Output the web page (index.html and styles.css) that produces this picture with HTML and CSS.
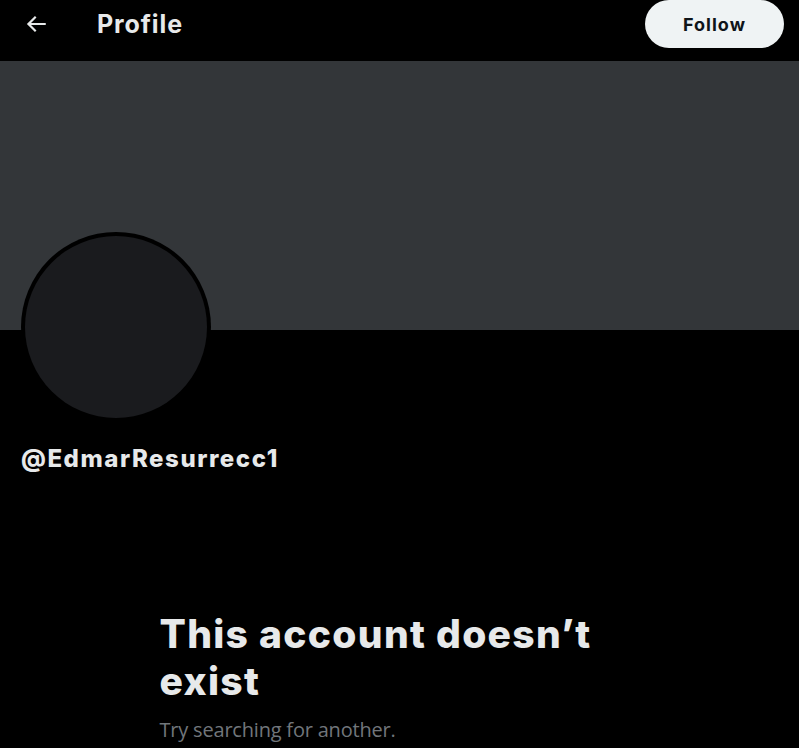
FILE: index.html
```html
<!DOCTYPE html>
<html lang="en">
<head>
<meta charset="utf-8">
<title>Profile</title>
<link rel="stylesheet" href="styles.css">
</head>
<body>
<div class="page">
  <header class="topbar">
    <div class="back">
      <svg viewBox="0 0 24 24" width="26" height="26" aria-hidden="true"><path fill="currentColor" d="M7.414 13l5.043 5.04-1.414 1.42L3.586 12l7.457-7.46 1.414 1.42L7.414 11H21v2H7.414z"/></svg>
    </div>
    <h1 class="title">Profile</h1>
    <button class="follow">Follow</button>
  </header>
  <div class="banner"></div>
  <section class="profile">
    <div class="avatar"><div class="avatar-inner"></div></div>
    <div class="handle">@EdmarResurrecc1</div>
  </section>
  <section class="empty">
    <h2 class="empty-title">This account doesn’t exist</h2>
    <p class="empty-sub">Try searching for another.</p>
  </section>
</div>
</body>
</html>
```
FILE: styles.css
```css
* { box-sizing: border-box; }
html, body { margin: 0; padding: 0; background: #000; }
body {
  font-family: "Inter", "Noto Sans", sans-serif;
  color: #e7e9ea;
  width: 799px;
  height: 748px;
  overflow: hidden;
}
.topbar {
  height: 61px;
  display: flex;
  align-items: flex-start;
  padding: 0 15px 0 23px;
}
.back {
  width: 26px;
  height: 48px;
  display: flex;
  align-items: center;
  color: #e7e9ea;
}
.back svg { display: block; }
.title {
  margin: 0 0 0 48px;
  font-size: 25px;
  font-weight: 700;
  line-height: 49px;
  letter-spacing: 0.9px;
  flex: 1;
}
.follow {
  width: 139px;
  height: 48px;
  border: 0;
  border-radius: 24px;
  background: #eff3f4;
  color: #0f1419;
  font-family: inherit;
  font-size: 18px;
  font-weight: 700;
  letter-spacing: 1px;
  padding: 0;
}
.banner {
  height: 269px;
  background: #333639;
}
.profile {
  padding: 0 21px;
}
.avatar {
  width: 190px;
  height: 190px;
  border-radius: 50%;
  background: #000;
  padding: 4px;
  margin-top: -98px;
}
.avatar-inner {
  width: 100%;
  height: 100%;
  border-radius: 50%;
  background: #1a1b1e;
}
.handle {
  margin-top: 23px;
  font-size: 24px;
  font-weight: 800;
  line-height: 28px;
  letter-spacing: 1.55px;
}
.empty {
  width: 480px;
  margin: 137px auto 0;
}
.empty-title {
  margin: 0;
  font-size: 39px;
  font-weight: 800;
  line-height: 47px;
  letter-spacing: 1.3px;
}
.empty-sub {
  margin: 13px 0 0;
  font-size: 20px;
  line-height: 26px;
  letter-spacing: -0.2px;
  color: #71767b;
  font-family: "Open Sans", "Noto Sans", sans-serif;
}
```
